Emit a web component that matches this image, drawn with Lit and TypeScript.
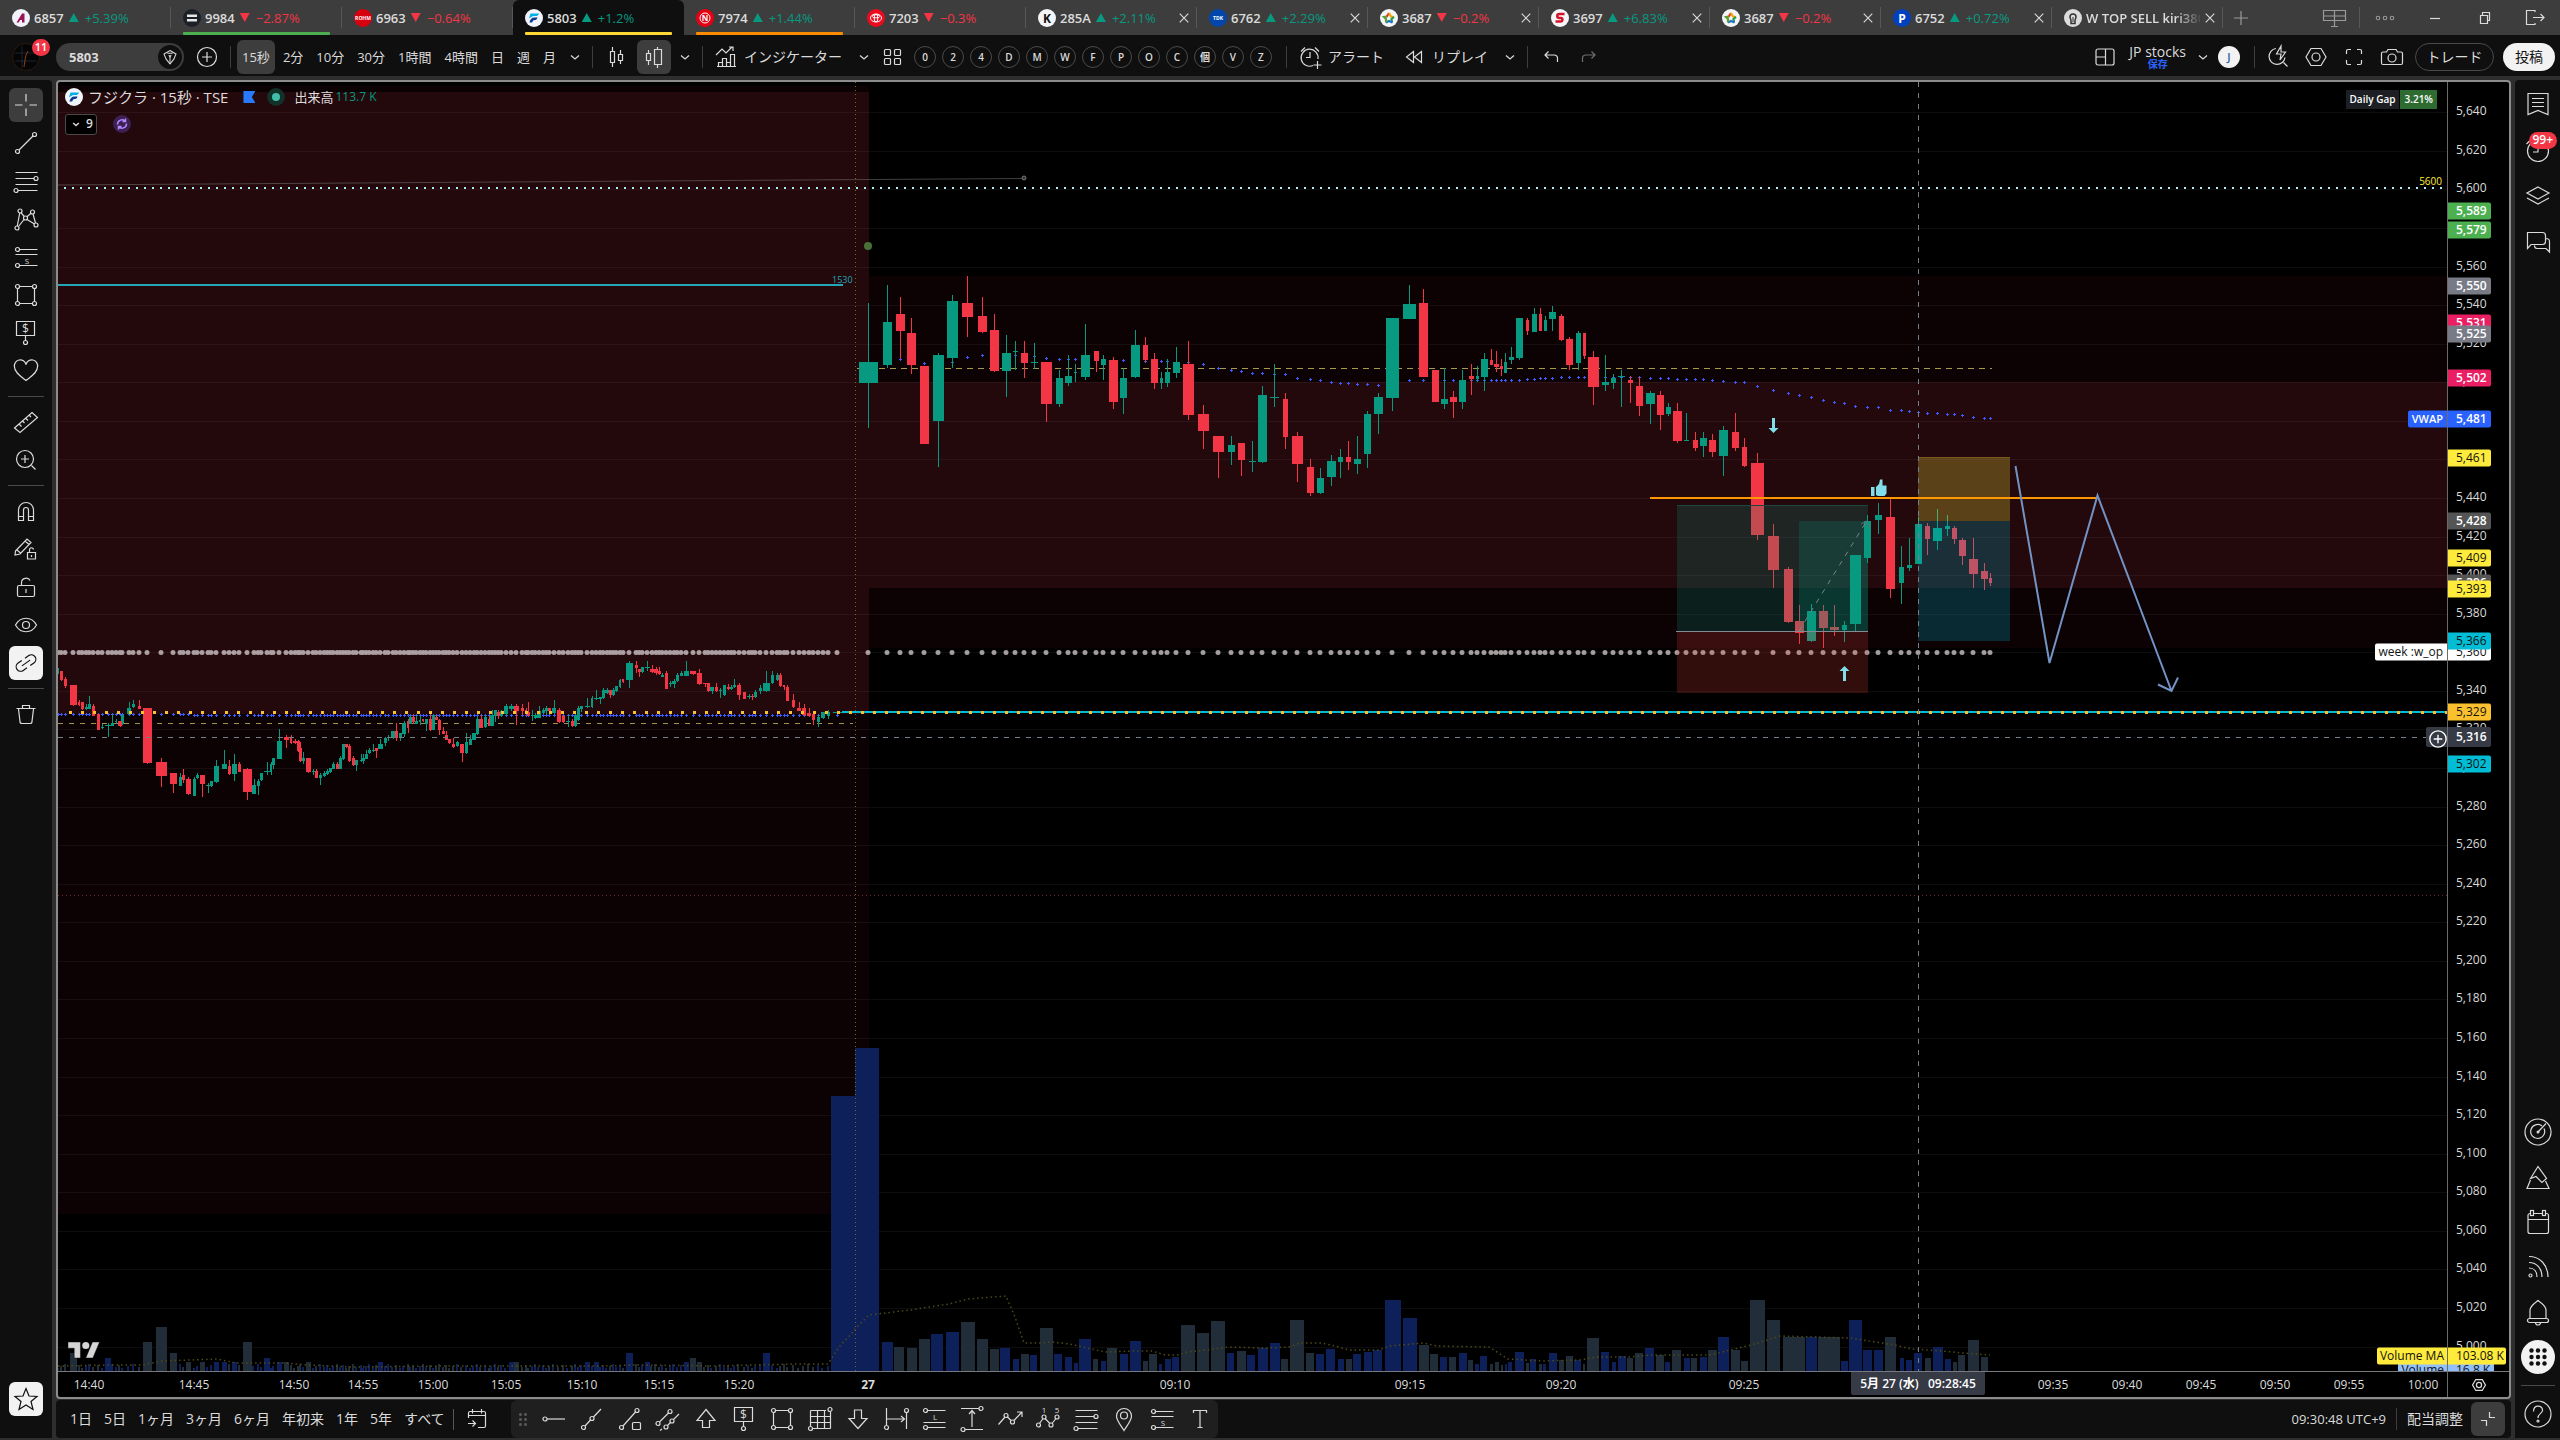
import { LitElement, html, svg, css, nothing } from "lit";
import { customElement } from "lit/decorators.js";
import { classMap } from "lit/directives/class-map.js";

/* ------------------------------------------------------------------ */
/* Icons (28 x 28 grid)                                                */
/* ------------------------------------------------------------------ */
const I: Record<string, unknown> = {
  cross: svg`<path d="M3 14h7.500M17.500 14H25M14 3v7.500M14 17.500V25"/>`,
  trend: svg`<circle cx="5.500" cy="22.500" r="2"/><circle cx="22.500" cy="5.500" r="2"/><path d="M7 21L21 7"/>`,
  fib: svg`<path d="M3.500 5.500h22M3.500 11.500H22M3.500 17.500h22M6 23.500h19.500"/><circle cx="24" cy="11.500" r="2"/><circle cx="4" cy="23.500" r="2"/>`,
  pattern: svg`<circle cx="5" cy="23" r="2"/><circle cx="8" cy="6" r="2"/><circle cx="13.500" cy="13" r="2"/><circle cx="20.500" cy="7" r="2"/><circle cx="24" cy="20" r="2"/><path d="M5.300 21L7.700 8M9 7.700l3.200 3.800M15 11.700l4-3.500M21 9l2.500 9M15 14.500l7.500 4.500M12 14.500l-5.500 7"/>`,
  short: svg`<path d="M7.500 6.500h18M3.500 11.500h22M7.500 22.500h18"/><circle cx="5.500" cy="6.500" r="2"/><circle cx="5.500" cy="22.500" r="2"/><text x="15" y="20.500">S</text>`,
  long: svg`<path d="M7.500 5.500h18M3.500 17.500h22M7.500 22.500h18"/><circle cx="5.500" cy="5.500" r="2"/><circle cx="5.500" cy="22.500" r="2"/><text x="15" y="14.500">L</text>`,
  rect: svg`<path d="M7.500 5.500h13M7.500 22.500h13M5.500 7.500v13M22.500 7.500v13"/><circle cx="5.500" cy="5.500" r="2"/><circle cx="22.500" cy="5.500" r="2"/><circle cx="5.500" cy="22.500" r="2"/><circle cx="22.500" cy="22.500" r="2"/>`,
  price: svg`<path d="M4.500 2.500h18v14h-18zM13.500 17v4.500"/><circle cx="13.500" cy="23.500" r="2"/><text class="big" x="13.500" y="13.500">$</text>`,
  heart: svg`<path d="M14 23.500C9 19.500 2.500 15.500 2.500 10a5.500 5.500 0 0 1 11.500-2.500A5.500 5.500 0 0 1 25.500 10c0 5.500-6.500 9.500-11.500 13.500z"/>`,
  ruler: svg`<path d="M2.500 20L20 4.500l5.500 5L8 24.500zM7 16l2.500 2.500M10.500 13l2 2M13.500 10l2.500 2.500M17 7l2 2"/>`,
  zoomin: svg`<circle cx="13" cy="13" r="8.500"/><path d="M19.500 19.500l4 4M9 13h8M13 9v8"/>`,
  magnet: svg`<path d="M6.500 23.500V13a7.500 7.500 0 0 1 15 0v10.500h-5V13a2.500 2.500 0 0 0-5 0v10.500zM6.500 19.500h5M16.500 19.500h5"/>`,
  penlock: svg`<path d="M3.500 16L15 4l4 3.500L8 19l-5 1zM13 6l4 3.500M5 15l3.500 3M15.500 17.500h8v6.500h-8zM17.500 17.500v-2.500a2 2 0 0 1 4-.5M19.500 20v2"/>`,
  lock: svg`<path d="M7 12.500h14a1.500 1.500 0 0 1 1.500 1.500v8a1.500 1.500 0 0 1-1.500 1.500H7A1.500 1.500 0 0 1 5.500 22v-8A1.500 1.500 0 0 1 7 12.500zM9.500 12.500V9.500c0-5 7-5.500 8.500-2M14 16v4"/>`,
  eye: svg`<path d="M3.500 14c5-9 16-9 21 0-5 9-16 9-21 0z"/><circle cx="14" cy="14" r="3.500"/>`,
  link: svg`<g transform="rotate(-35 14 14)"><path d="M12 9.500H7.500a4.500 4.500 0 0 0 0 9H12M16 9.500h4.500a4.500 4.500 0 0 1 0 9H16M9 14h10"/></g>`,
  trash: svg`<path d="M4.500 8.500h19M10.500 8V5.500h7V8M6.500 9l1.500 12.500a2 2 0 0 0 2 2h8a2 2 0 0 0 2-2L21.500 9"/>`,
  star: svg`<path d="M14 3.500l3 7.500 8 .5-6 5 2 8-7-4.500-7 4.500 2-8-6-5 8-.5z"/>`,
  list: svg`<path d="M4 3.500h20v21l-10-4-10 4zM8 8.500h12M8 12.500h12M8 16.500h12"/>`,
  clock: svg`<circle cx="14" cy="15" r="10.500"/><path d="M14 9v7H9M2.500 8l4-4"/>`,
  layers: svg`<path d="M14 5l11 6-11 6-11-6zM3 16l11 6 11-6"/>`,
  chat: svg`<path d="M3.500 4.500h15a3 3 0 0 1 3 3v6a3 3 0 0 1-3 3H7l-3.500 4zM22 10.500c2 0 3.500 1 3.500 3v10.500L22 20.500h-9c-1.500 0-2.500-1-2.500-3"/>`,
  radar: svg`<circle cx="14" cy="14" r="13"/><path d="M20 10.500a7 7 0 1 1-2-2.500M14 14l8-8.500"/><circle class="fill" cx="14" cy="14" r="1.500"/>`,
  mountain: svg`<path d="M14 3.500l8.500 12-4.500 4-6-6-5.500 2zM6.500 17L3 25.500h22L21.500 18"/>`,
  calendar: svg`<path d="M9 5.500h10M6.500 5.500H6a2 2 0 0 0-2 2v16a2 2 0 0 0 2 2h16.500a2 2 0 0 0 2-2v-16a2 2 0 0 0-2-2H22M4 11.500h20.500"/><rect x="6.500" y="2.500" width="3" height="5"/><rect x="18.500" y="2.500" width="3" height="5"/>`,
  rss: svg`<circle cx="6.500" cy="22.500" r="1.500"/><path d="M5 15c5 0 8 3.500 8 9M5 9.500c8 0 13 6 13 14.500M5 3.500c11 0 19 8.500 19 20.500"/>`,
  bell: svg`<path d="M6 20.500V12c0-4 4-6.500 8-9.500 4 3 8 5.500 8 9.500v8.500M11.500 24.500a2.500 2.500 0 0 0 5 0"/><rect x="3.500" y="20.500" width="21" height="4" rx="2"/>`,
  apps: svg`<g class="fill"><circle cx="7.500" cy="7.500" r="2.200"/><circle cx="14" cy="7.500" r="2.200"/><circle cx="20.500" cy="7.500" r="2.200"/><circle cx="7.500" cy="14" r="2.200"/><circle cx="14" cy="14" r="2.200"/><circle cx="20.500" cy="14" r="2.200"/><circle cx="7.500" cy="20.500" r="2.200"/><circle cx="14" cy="20.500" r="2.200"/><circle cx="20.500" cy="20.500" r="2.200"/></g>`,
  help: svg`<circle cx="14" cy="14" r="13"/><path d="M9.500 11.500C9.500 4 19 5 18.500 10.500 18 14 14 13.500 14 18"/><circle cx="14" cy="21" r="1"/>`,
  plusc: svg`<circle cx="14" cy="14" r="9.500"/><path d="M9 14h10M14 9v10"/>`,
  candles: svg`<path d="M10.500 4v4M10.500 19v5M8.500 8.500h4v11h-4zM18.500 7v4M18.500 17v4M16.500 11.500h4v6h-4z"/>`,
  candlev: svg`<path d="M8.500 7v4M8.500 17v5M6.500 10.500h4v7h-4zM17.500 4v3M17.500 21v4M14.500 6.500h7v15h-7z"/>`,
  indic: svg`<path d="M4 12l6-6 4 4 6-6M6.500 23.500v-4h4v4M10.500 23.500v-8h4v8M14.500 19.500h4v4M18.500 23.500v-12h4v12zM5 23.500h19M17 4h4v4"/>`,
  grid4: svg`<rect x="6.500" y="6.500" width="6" height="6" rx="1"/><rect x="16.500" y="6.500" width="6" height="6" rx="1"/><rect x="6.500" y="15.500" width="6" height="6" rx="1"/><rect x="16.500" y="15.500" width="6" height="6" rx="1"/>`,
  alarm: svg`<path d="M17 22.500A8.500 8.500 0 1 1 22 16M14 9v5.500h-4M5 8.500l4-4M19 4.500l4 4M21.500 18v8M17.500 22h8"/>`,
  rewind: svg`<path d="M13.500 8.500v11L6.500 14zM21.500 8.500v11l-7-5.500z"/>`,
  undo: svg`<path d="M11.500 8.500L8 12l3.500 3.500M8.500 12H17a3.500 3.500 0 0 1 3.500 3.500V19"/>`,
  redo: svg`<path d="M16.500 8.500L20 12l-3.500 3.500M19.500 12H11a3.500 3.500 0 0 0-3.500 3.500V19"/>`,
  layout: svg`<rect x="5" y="6" width="18" height="16" rx="2"/><path d="M14.500 6v16M5 14h9.500"/>`,
  quick: svg`<path d="M12 5.500a8 8 0 1 0 9 9M19.500 19.500l4 4M17 3l-4.500 8H17l-1 6 5.500-8H17z"/>`,
  hex: svg`<path d="M9 5.500h10l5 8.500-5 8.500H9L4 14z"/><circle cx="14" cy="14" r="4"/>`,
  full: svg`<path d="M6.500 11V8a1.500 1.500 0 0 1 1.500-1.500h3M17 6.500h3A1.500 1.500 0 0 1 21.500 8v3M21.500 17v3a1.500 1.500 0 0 1-1.500 1.500h-3M11 21.500H8A1.500 1.500 0 0 1 6.500 20v-3"/>`,
  camera: svg`<path d="M10 6.500h8l1.500 2.500H23a1.500 1.500 0 0 1 1.500 1.500V20a1.500 1.500 0 0 1-1.500 1.500H5A1.500 1.500 0 0 1 3.500 20v-9.500A1.500 1.500 0 0 1 5 9h3.500z"/><circle cx="14" cy="15" r="4"/>`,
  chev: svg`<path d="M10 12.500l4 3.500 4-3.500"/>`,
  goto: svg`<path d="M5.500 13V8A1.500 1.500 0 0 1 7 6.500h14A1.500 1.500 0 0 1 22.500 8v13a1.500 1.500 0 0 1-1.500 1.500h-6M5.500 10.500h17M9.500 4v4.500M18.500 4v4.500M5 18.500h7M9.500 15.500l3 3-3 3"/>`,
  hray: svg`<circle cx="5" cy="14" r="2"/><path d="M7 14h18"/>`,
  ray: svg`<circle cx="5.500" cy="22.500" r="2"/><circle cx="14" cy="13.500" r="2"/><path d="M7 21l5.500-6M15.500 12L23 4"/>`,
  raybox: svg`<circle cx="5.500" cy="22.500" r="2"/><circle cx="21" cy="5.500" r="2"/><path d="M7 21L19.500 7"/><rect x="16.500" y="17.500" width="8" height="7" rx="1"/>`,
  channel: svg`<circle cx="4" cy="18.500" r="2"/><circle cx="16" cy="6.500" r="2"/><circle cx="12" cy="22" r="2"/><circle cx="18" cy="16" r="2"/><path d="M5.500 17l9-9M13.500 20.500l3-3M19.500 14.500L25 9M8 24l-2 1.500"/>`,
  upar: svg`<path d="M14 4.500l9 11h-5.500v7h-7v-7H5z"/>`,
  downar: svg`<path d="M14 23.500l-9-10h5.500V5h7v8.500H23z"/>`,
  table: svg`<path d="M4.500 5.500H20M4.500 11.500h20M4.500 17.500h20M7 23.500h17.500M4.500 5.500V21M11.500 5.500v18M18.500 5.500v18M24.500 7v16.500"/><circle cx="24" cy="4.500" r="2"/><circle cx="4.500" cy="23.500" r="2"/>`,
  drange: svg`<path d="M4.500 3v17M24.500 7v17M5 14h17M19 11l3.500 3-3.500 3"/><circle cx="4.500" cy="22.500" r="2"/><circle cx="24.500" cy="5.500" r="2"/>`,
  prange: svg`<path d="M3 3.500h18M7 24.500h18M14 22V6M11 9l3-3.500L17 9"/><circle cx="23" cy="3.500" r="2"/><circle cx="5" cy="24.500" r="2"/>`,
  zig: svg`<circle cx="10" cy="10.500" r="2"/><circle cx="16.500" cy="17" r="2"/><path d="M2.500 19.500L9 12M11.500 12l3.500 3.500M18 15.500l7.500-8M21 7h5v5"/>`,
  elliott: svg`<circle cx="4.500" cy="20" r="2"/><circle cx="10" cy="12" r="2"/><circle cx="17" cy="20" r="2"/><circle cx="23" cy="12" r="2"/><path d="M5.500 18.500l3.500-5M11 13.500l5 5M18 18.500l4-5"/><text x="10" y="7.500">1</text><text x="23" y="7.500">5</text>`,
  pin: svg`<path d="M14 25.500C10 19 6.500 15.500 6.500 11a7.500 7.500 0 0 1 15 0c0 4.500-3.500 8-7.500 14.500z"/><circle cx="14" cy="10.500" r="3.500"/>`,
  textt: svg`<path d="M7.500 8V5.500h13V8M14 5.500v17M11.500 22.500h5"/>`,
  collapse: svg`<path d="M15.500 7v5.500H21M7 15.500h5.500V21"/>`,
  close: svg`<path d="M8 8l12 12M20 8L8 20"/>`,
  plus: svg`<path d="M7 14h14M14 7v14"/>`,
  monitor: svg`<path d="M3.500 6.500h22v10h-22zM14.500 6.500V22M11 22.500h7M3.500 12h22"/>`,
  dots3: svg`<circle cx="6" cy="14" r="2"/><circle cx="14" cy="14" r="2"/><circle cx="22" cy="14" r="2"/>`,
  min: svg`<path d="M9 14.500h10"/>`,
  restore: svg`<path d="M9.500 11.500h7v8h-7zM11.500 11V8.500h7v8H17"/>`,
  exit: svg`<path d="M14 8V6.500H5.500v14H14V19M12 13.500h11M19.500 10l3.500 3.500-3.500 3.500"/>`,
  gem: svg`<path d="M14 6.500l7 4-2.500 6L14 22l-4.500-5.500-2.500-6zM14 12v8M11 9.500h6"/><path class="fill" d="M12 12h4l-2 3z"/>`,
};
const ic = (name: string) =>
  html`<svg class="ic" viewBox="0 0 28 28" aria-hidden="true">${I[name]}</svg>`;

const iconCss = css`
  .ic { width: 28px; height: 28px; flex: none; fill: none; stroke: currentColor; stroke-width: 1.2; display: block; }
  .ic .fill { fill: currentColor; stroke: none; }
  .ic text { font: 8px "Open Sans", sans-serif; fill: currentColor; stroke: none; text-anchor: middle; }
  .ic text.big { font-size: 12px; }
`;

/* ------------------------------------------------------------------ */
/* Company marks                                                       */
/* ------------------------------------------------------------------ */
const marks: Record<string, unknown> = {
  advan: svg`<circle cx="9" cy="9" r="9" fill="#f0f3fa"/><path d="M4.500 13.500L10 4.500h2.500v9H10v-2.500H8L6.800 13.500z" fill="#9c1458"/>`,
  soft: svg`<circle cx="9" cy="9" r="9" fill="#1b2126"/><path d="M4 5.500h10v2.500H4zM4 10h10v2.500H4z" fill="#e6e6e6"/>`,
  rohm: svg`<circle cx="9" cy="9" r="9" fill="#d8000f"/><text x="9" y="11" class="m" font-size="5" fill="#fff">ROHM</text>`,
  fuji: svg`<circle cx="9" cy="9" r="9" fill="#f0f3fa"/><path d="M5.500 4.500H14c-.5 2-2 2.500-3.500 2.500H9C7 7 5.500 8.500 4 9.500z" fill="#00aeea"/><path d="M4.500 13.500c.5-3 2-5 5-5h3c-.5 2-1.500 2.500-3 2.500-1.500 0-1.800 1.500-2.500 2.500z" fill="#0b3b8f"/>`,
  nin: svg`<circle cx="9" cy="9" r="9" fill="#e60012"/><circle cx="9" cy="9" r="5" fill="none" stroke="#fff"/><text x="9" y="12" class="m" font-size="8" fill="#fff">N</text>`,
  toy: svg`<circle cx="9" cy="9" r="9" fill="#eb0a1e"/><g fill="none" stroke="#fff"><ellipse cx="9" cy="9" rx="5.500" ry="4"/><ellipse cx="9" cy="9" rx="1.800" ry="4"/><ellipse cx="9" cy="7.300" rx="3.800" ry="1.600"/></g>`,
  kio: svg`<circle cx="9" cy="9" r="9" fill="#f4f5f8"/><text x="9" y="13.500" class="m" font-size="12" fill="#111">K</text>`,
  tdk: svg`<circle cx="9" cy="9" r="9" fill="#0046ad"/><text x="9" y="11" class="m" font-size="5" fill="#fff">TDK</text>`,
  fix: svg`<circle cx="9" cy="9" r="9" fill="#f4f5f8"/><g fill="none" stroke-width="2.200"><path d="M9 4L6.500 8" stroke="#e63329"/><path d="M9 4l2 3.500 3 .5" stroke="#f5a400"/><path d="M14 8l-2.500 2 .5 3.500" stroke="#1c9e4b"/><path d="M12.500 13.500L9 12l-3 1.500" stroke="#1e73c9"/><path d="M6 13.500V10L4 8l3-.5" stroke="#5c9f2f"/></g>`,
  shift: svg`<circle cx="9" cy="9" r="9" fill="#f4f5f8"/><path d="M13.500 5H8.500C5.500 5 5.500 9 8.500 9H10c2 0 2 3.500-.5 3.500H4.500" fill="none" stroke="#d3122a" stroke-width="2.500"/>`,
  pana: svg`<circle cx="9" cy="9" r="9" fill="#0041c0"/><text x="9" y="13.500" class="m" font-size="12" fill="#fff">P</text>`,
  index: svg`<circle cx="9" cy="9" r="9" fill="#dcdcdc"/><path d="M6 8a3 3 0 0 1 6 0c0 1.500-1 2-1 3.500v3H7v-3C7 10 6 9.500 6 8z" fill="none" stroke="#333" stroke-width="1.500"/><path d="M9 8v5" stroke="#333"/>`,
};
const mark = (name: string) =>
  html`<svg class="mark" viewBox="0 0 18 18" aria-hidden="true">${marks[name]}</svg>`;
const markCss = css`
  .mark { width: 18px; height: 18px; flex: none; display: block; }
  .mark .m { font-family: "Open Sans", sans-serif; font-weight: 700; text-anchor: middle; }
`;

/* ------------------------------------------------------------------ */
/* Series: left, right, high, body top, body bottom, low, direction    */
/* ------------------------------------------------------------------ */
type Bar = { x0: number; x1: number; h: number; t: number; b: number; l: number; up: boolean };
const session = (ox: number, oy: number, sx: number, sy: number, rows: string): Bar[] =>
  rows.trim().split(/\s*;\s*/).filter(Boolean).map((r) => {
    const p = r.split(" ");
    const n = p.slice(0, 6).map(Number);
    const X = (v: number) => Math.round(ox + v / sx);
    const Y = (v: number) => Math.round(oy + v / sy);
    return { x0: X(n[0]), x1: Math.max(X(n[1]), X(n[0]) + 1), h: Y(n[2]), t: Y(n[3]), b: Math.max(Y(n[4]), Y(n[3]) + 1), l: Y(n[5]), up: p[6] === "u" };
  });

const afternoon = session(50, 600, 1.912, 3, `
14 18 205 213 219 222 u;19 25 213 213 240 243 d;27 33 231 237 258 264 d;38 52 255 255 315 318 d;54 58 300 306 315 318 d;59 65 306 306 327 330 d;66 72 312 321 327 330 u;72 78 288 312 327 327 u;80 86 312 318 348 348 d;90 96 342 342 390 390 d;97 103 372 381 384 387 u;105 116 369 375 378 411 u;117 123 342 369 378 378 u;124 129 357 363 367 372 u;130 137 363 363 378 381 d;136 142 342 345 372 375 u;148 155 306 324 342 348 u;157 163 300 312 321 324 u;168 174 300 318 327 327 d;178 195 324 324 489 492 d;203 224 474 486 528 561 d;229 243 519 519 552 579 d;246 252 519 531 558 558 u;252 258 507 525 540 549 d;260 270 531 537 582 585 d;273 279 531 537 588 588 u;279 285 519 525 534 537 u;287 297 525 525 552 591 d;299 306 549 555 558 579 u;306 312 543 543 558 561 u;314 323 480 498 546 549 u;329 339 450 492 507 507 u;340 346 480 498 522 525 d;348 358 462 492 522 543 u;359 365 486 492 516 516 d;369 386 504 507 576 600 d;387 394 537 555 582 582 u;396 402 537 543 558 585 u;402 407 519 519 540 543 u;409 420 486 513 516 525 u;420 425 486 492 516 525 u;424 430 474 474 495 507 u;434 444 387 423 477 477 u;447 457 405 411 420 444 d;458 463 405 411 429 432 d;464 473 417 423 429 432 d;472 478 420 423 453 456 d;477 482 426 444 483 486 d;482 488 456 474 483 492 u;490 499 474 474 516 519 d;501 507 507 513 516 525 u;507 513 507 513 534 534 d;514 520 519 525 534 555 u;522 527 513 519 528 531 u;527 533 507 513 522 525 u;533 539 504 504 516 519 u;539 545 486 492 507 507 u;547 553 486 492 507 507 d;553 559 468 474 507 507 u;558 564 432 432 477 480 u;564 570 432 432 441 444 d;570 576 432 438 483 486 d;577 583 468 474 495 498 d;583 589 480 480 495 513 u;592 597 462 480 483 486 u;597 602 462 474 483 492 u;602 608 450 462 477 477 u;608 614 444 450 459 462 u;616 621 432 450 453 456 u;621 627 444 444 453 474 d;627 637 417 432 447 447 u;639 644 411 414 429 438 u;645 650 405 411 414 423 u;652 659 393 393 414 417 u;660 666 369 393 414 423 d;667 673 399 399 411 423 u;673 680 363 369 402 411 u;682 687 357 363 384 399 d;686 692 345 351 372 372 u;692 698 342 351 366 372 d;698 704 345 363 372 372 u;705 710 348 360 366 375 u;711 715 357 357 363 366 d;717 722 357 357 372 393 u;725 730 342 357 390 393 d;730 736 345 345 390 390 u;736 741 345 351 360 360 d;741 748 357 360 390 405 d;750 756 381 393 402 402 d;756 761 393 405 420 420 d;761 767 417 417 429 432 d;768 774 414 432 441 444 d;776 782 423 426 438 441 u;783 792 432 432 459 486 d;794 799 399 426 459 462 u;801 807 405 417 435 435 u;807 814 399 399 420 420 u;814 820 348 357 402 405 u;821 828 345 357 384 384 d;829 836 345 351 381 384 u;837 841 348 357 378 378 d;842 849 330 345 378 378 u;849 855 330 330 348 366 u;855 861 330 336 348 357 d;861 866 330 333 348 351 u;868 875 312 318 342 348 u;878 887 312 318 327 333 u;888 897 312 318 333 375 d;900 907 312 324 333 345 d;908 912 324 330 339 342 d;912 918 306 336 348 348 d;920 925 330 345 348 363 u;926 931 339 345 354 357 u;932 938 318 333 354 354 u;940 946 324 330 339 342 u;947 952 318 324 333 345 u;953 958 324 324 333 336 d;959 968 300 324 339 342 u;970 977 324 330 366 369 d;979 985 345 348 366 369 d;987 994 345 363 366 381 u;996 1001 357 363 378 381 d;1002 1008 345 345 378 381 u;1008 1014 318 324 360 363 u;1014 1020 318 318 327 336 u;1022 1032 294 318 321 324 u;1034 1039 288 294 321 324 u;1040 1050 270 294 297 300 u;1050 1056 291 291 297 312 u;1056 1062 264 270 294 297 u;1062 1068 264 270 279 282 u;1068 1074 270 270 285 294 d;1074 1080 264 270 285 288 u;1080 1086 258 258 273 276 u;1087 1092 237 240 261 264 u;1093 1098 237 237 246 249 d;1101 1115 183 189 240 264 u;1118 1124 183 195 204 219 d;1124 1130 207 207 216 231 d;1130 1136 201 201 216 219 u;1137 1148 183 201 204 213 u;1148 1154 195 207 216 219 d;1155 1162 201 207 219 225 d;1162 1168 201 213 222 225 d;1169 1174 219 225 231 231 u;1176 1182 213 219 267 267 d;1183 1189 243 249 252 261 u;1190 1196 237 243 252 264 u;1197 1203 219 225 243 246 u;1204 1210 213 219 228 228 u;1212 1222 183 213 228 228 u;1223 1236 213 213 222 225 d;1237 1247 207 219 252 255 d;1248 1256 249 249 252 261 d;1256 1262 249 249 273 276 d;1261 1270 261 261 273 282 u;1271 1277 249 261 273 276 d;1279 1285 264 270 273 294 u;1287 1293 255 255 285 288 u;1294 1300 252 261 267 270 d;1300 1306 255 261 267 270 u;1306 1312 237 255 261 264 u;1314 1322 249 255 285 300 d;1325 1331 276 276 297 297 d;1332 1340 282 288 291 297 u;1341 1346 282 288 291 300 d;1346 1352 270 276 291 294 u;1356 1361 255 264 273 282 u;1363 1376 213 249 273 276 u;1378 1385 213 225 249 252 u;1388 1394 219 225 240 243 u;1394 1400 219 225 258 261 d;1401 1406 255 255 261 270 d;1407 1413 255 261 303 303 d;1418 1425 282 300 321 324 d;1429 1436 306 324 333 333 d;1438 1445 312 324 345 348 d;1448 1455 324 339 348 351 d;1456 1463 342 342 360 375 d;1466 1472 345 351 366 381 u;1475 1482 336 336 354 357 u;1485 1492 330 336 348 357 u;1497 1514 336 336 339 339 u`);

const morning = [
  ...session(840, 220, 2.45, 3, `
47 93 249 426 489 624 u;105 127 195 306 435 444 u;137 159 231 282 333 418 d;164 186 294 339 435 462 d;196 218 438 438 672 672 d;228 255 399 405 603 741 u;262 289 225 243 414 444 u;299 326 168 249 291 351 d;338 360 231 288 336 339 d;367 390 282 330 453 456 d;397 419 345 399 453 531 u;424 436 363 393 396 450 u;443 461 363 399 429 474 d;468 485 369 426 429 446 u;492 519 426 426 552 606 d;529 546 450 474 552 561 u;551 568 405 468 489 498 u;573 581 432 456 459 486 u;590 612 312 405 471 480 u;622 635 393 393 423 456 d;639 652 405 417 435 480 u;659 681 411 420 546 567 d;686 703 444 474 534 582 u;713 735 330 375 471 474 u;742 755 351 375 420 426 d;762 779 399 417 489 507 d;784 791 456 474 489 507 u;796 808 417 456 489 501 u;816 833 381 426 459 474 u;840 867 363 432 585 600 d;877 904 555 582 633 687 d;914 941 648 648 696 774 d;951 968 648 675 696 735 u;975 992 669 669 720 768 d;1002 1019 663 723 726 756 u;1024 1046 498 525 726 729 u;1053 1076 432 531 534 561 u;1085 1098 519 537 651 687 d;1107 1134 636 648 732 786 d;1144 1161 717 741 819 828 d;1169 1186 744 774 819 822 u;1193 1215 705 723 771 798 u;1220 1232 687 711 726 774 u;1240 1252 663 711 726 750 d;1259 1276 648 717 732 762 u;1284 1301 573 582 702 744 u;1308 1330 519 531 582 642 u;1338 1370 294 294 534 573 u`),
  ...session(1400, 260, 3, 3, `
9 48 75 132 177 177 u;57 84 87 129 351 351 d;96 117 330 330 426 426 d;123 144 324 417 432 447 u;150 171 393 411 426 474 d;177 198 330 360 426 447 u;207 222 312 348 357 405 d;228 237 318 348 357 366 u;243 264 279 297 351 393 u;270 279 267 300 315 315 d;282 297 273 312 321 336 d;300 309 297 318 327 348 d;312 321 279 306 339 339 u;327 342 261 291 300 312 u;348 369 174 174 294 300 u;378 387 174 180 213 225 d;396 411 144 162 216 216 u;417 426 144 162 213 213 d;432 441 168 180 213 213 u;447 468 138 156 177 213 u;477 492 162 168 240 243 d;498 519 231 237 315 330 d;528 543 213 219 309 330 u;549 558 219 219 288 297 d;564 597 273 291 381 435 d;606 627 285 366 375 393 u;633 648 342 354 369 387 u;654 675 330 348 351 441 u;684 699 348 360 369 429 d;708 729 351 378 438 468 d;738 765 393 399 432 492 u;771 792 393 405 465 510 d;798 813 429 441 462 468 u;819 846 429 453 543 549 d;852 867 459 540 543 543 u;879 894 516 540 564 573 d;900 921 516 534 558 591 u;927 948 522 540 576 591 d;957 984 498 510 588 648 u;996 1017 459 516 564 573 d;1026 1041 534 561 618 621 d;1053 1092 579 609 825 840 d;1104 1137 792 828 930 984 d;1152 1179 921 927 1086 1089 d;1185 1212 1035 1083 1119 1152 d;1221 1248 1032 1053 1143 1146 u`),
  ...session(1640, 400, 2.8, 3, `
501 526 615 633 684 744 d;532 557 615 681 690 708 d;566 580 663 675 690 726 u;588 619 465 465 672 693 u;627 647 345 363 474 489 u;658 678 309 345 360 402 u;689 714 297 351 567 594 d;725 739 438 501 549 612 u;748 762 414 495 504 513 u;770 790 350 372 492 492 u;798 812 369 378 417 465 d;820 846 327 384 423 450 u;854 868 345 378 387 408 u;874 888 378 384 417 432 d;893 913 414 420 468 495 d;921 946 414 477 522 564 d;955 974 489 513 537 570 d;977 986 519 534 549 558 d`),
];
const allBars = [...afternoon, ...morning];

const BASE = 1371;
type Vol = { x0: number; x1: number; y: number; up: boolean };
const volume = (ox: number, oy: number, sx: number, rows: string): Vol[] =>
  rows.split(";").map((r) => {
    const p = r.trim().split(" ");
    return { x0: Math.round(ox + +p[0] / sx), x1: Math.round(ox + +p[1] / sx), y: Math.round(oy + +p[2] / 3), up: p[3] === "b" };
  });
/* Bar width grows with traded volume, so width squared gives the column height. */
const fromWidth = (b: Bar): Vol => {
  const w = b.x1 - b.x0;
  return { x0: b.x0 - 1, x1: b.x1 + 1, y: Math.round(BASE - Math.max(4, 0.42 * w * w)), up: b.up };
};
const volumes: Vol[] = [
  ...afternoon.slice(0, -1).map((b, i) => {
    const w = b.x1 - b.x0;
    return { x0: b.x0, x1: w > 4 ? b.x1 : b.x0 + 2, y: w > 4 ? Math.round(BASE - 0.36 * w * w) : BASE - 3 - ((i * 7) % 5), up: b.up };
  }),
  { x0: 831, x1: 855, y: 1096, up: true },
  { x0: 855, x1: 879, y: 1048, up: true },
  ...volume(850, 1220, 1.823, "58 78 366 b;80 98 381 g;104 122 384 g;126 146 357 g;148 170 342 b;175 199 336 b;202 228 306 g;232 252 357 g;255 272 387 g;273 292 384 b;297 308 417 b;312 326 402 g;328 341 405 b;346 370 324 g;372 387 402 b;392 405 411 b;408 416 429 b;418 439 357 b;443 452 417 g;458 467 423 b;469 487 384 g;492 507 402 b;511 531 363 b;534 543 423 g;545 560 402 g;563 569 432 b;574 585 417 b;587 600 411 b;603 629 315 g;633 655 339 g;658 684 303 g;687 700 399 b;706 722 393 g;724 738 405 b;744 762 384 b;766 784 369 b;786 799 417 g;802 828 300 g;831 846 399 g;850 864 402 b;868 884 387 b;890 901 417 b;904 915 417 g;917 932 402 b;937 952 396 b;954 970 390 b;975 1005 240 b;1008 1034 294 b;1037 1056 375 g;1057 1072 402 g;1076 1088 411 b;1092 1105 411 g;1110 1125 399 b;1127 1136 420 g;1140 1146 432 b;1149 1161 408 b;1167 1172 432 g;1176 1183 426 g;1187 1191 435 g;1194 1198 432 b;1199 1207 426 b;1212 1229 396 b;1233 1238 429 g;1240 1251 417 b;1256 1262 432 g;1264 1268 432 b;1274 1289 399 b;1292 1302 420 g;1305 1318 408 g;1320 1333 420 b;1336 1340 432 g;1344 1366 354 g;1369 1384 396 b;1389 1397 426 b;1400 1414 408 b;1416 1427 414 g;1431 1446 399 g;1449 1466 384 b;1470 1484 405 g;1486 1495 426 b;1499 1515 390 g;1521 1532 414 b;1534 1544 414 g;1550 1563 411 b"),
  ...morning.filter((b) => b.x0 > 1708 && b.x0 < 1896).map(fromWidth),
  ...volume(1900, 1080, 2.376, "0 10 834 b;14 29 840 b;33 52 819 b;59 74 834 g;78 102 801 b;107 121 837 b;126 135 846 g;138 154 825 g;162 188 780 g;192 209 831 g"),
];

const path = (rows: string) => rows.split(";").map((s) => s.split(" ").map(Number) as [number, number]);
const shift = (pts: [number, number][], ox: number, oy: number, sx: number, sy: number) =>
  pts.map(([x, y]) => [Math.round(ox + x / sx), Math.round(oy + y / sy)] as [number, number]);

const volMa = [
  ...shift(path("105 257;200 254;258 256;295 242;395 236;430 249;520 248;560 254;640 260;820 258;1100 259;1160 255;1300 257;1450 252;1510 251;1530 200;1555 155"), 0, 1280, 1.823, 3),
  ...shift(path("5 332;35 285;110 270;180 252;215 238;285 227;300 290;318 368;345 370;370 366;400 372;425 381;465 397;520 394;550 394;575 404;600 404;615 395;650 391;690 382;760 383;800 380;820 370;860 369;885 377;910 390;965 390;985 378;1045 369;1070 377;1165 381;1200 418;1260 424;1330 420;1360 411;1420 411;1460 405;1568 405"), 850, 1220, 1.823, 3),
  [1755, 1344] as [number, number], [1780, 1336] as [number, number], [1850, 1338] as [number, number], [1895, 1345] as [number, number],
  ...shift(path("5 800;30 808;100 812;150 818;215 824"), 1900, 1080, 2.376, 3),
];
const vwap = [
  ...shift(path("120 418;148 418;207 430;275 427;312 412;349 406;430 406;476 409;506 415;540 418;577 418;694 421;850 427;890 433;928 445;984 454;1010 460;1090 463;1120 475;1177 481;1204 487;1268 493;1320 496;1350 485"), 840, 220, 2.45, 3),
  ...shift(path("28 361;335 361;380 358;430 355;510 352;718 352;750 355;886 358;937 361;970 364;1033 367;1072 379;1120 391;1165 400;1234 412"), 1400, 260, 3, 3),
  ...shift(path("544 7;572 10;603 19;668 22;701 31;732 31;780 37;861 43;903 46;934 52;981 55"), 1640, 400, 2.8, 3),
];
const at = (pts: [number, number][], x: number) => {
  for (let i = 1; i < pts.length; i++)
    if (x <= pts[i][0]) {
      const [a, b] = [pts[i - 1], pts[i]];
      return Math.round(a[1] + ((x - a[0]) / (b[0] - a[0] || 1)) * (b[1] - a[1]));
    }
  return pts[pts.length - 1][1];
};
const centre = (b: Bar) => Math.floor((b.x0 + b.x1) / 2);
const box = (x0: number, y0: number, x1: number, y1: number) => `M${x0} ${y0}H${x1}V${y1}H${x0}z`;
const candlePath = (up: boolean) =>
  allBars.filter((b) => b.up === up).map((b) => {
    const c = centre(b);
    return box(b.x0, b.t, b.x1, b.b) + (b.h < b.t ? box(c, b.h, c + 1, b.t) : "") + (b.l > b.b ? box(c, b.b, c + 1, b.l) : "");
  }).join("");
const volPath = (up: boolean) => volumes.filter((v) => v.up === up).map((v) => box(v.x0, v.y, v.x1, BASE)).join("");
const plusPath = (x: number, y: number) => `${box(x - 1, y, x + 2, y + 1)}${box(x, y - 1, x + 1, y + 2)}`;
const crossPath =
  afternoon.map((b) => plusPath(centre(b), b.x0 < 188 ? 714 : 715)).join("") +
  morning.slice(2).map((b) => plusPath(centre(b), at(vwap, centre(b)))).join("");
const dotPath = allBars.map((b) => `M${centre(b)} 652.500h.01`).join("");

/* Plot window in chart units */
const VX = 58, VY = 82, VW = 2389, VH = 1289;
const yOf = (p: number) => 112.3 + (5640 - p) * 1.9286;
const pctY = (y: number) => ((y - VY) / VH) * 100;
const pctX = (x: number) => ((x - VX) / VW) * 100;
const ticks = Array.from({ length: 33 }, (_, i) => 5640 - i * 20);

const tags: [number, string][] = [
  [5589, "green"], [5579, "green"], [5550, "grey"], [5531, "pink"], [5525, "grey"], [5502, "pink"], [5481, "blue"],
  [5461, "yellow"], [5428, "dim"], [5409, "yellow"], [5396, "dim"], [5393, "yellow"], [5360, "white"], [5366, "cyan"],
  [5329, "amber"], [5316, "cursor"], [5302, "cyan"],
];
const times: [number, string][] = [
  [89, "14:40"], [194, "14:45"], [294, "14:50"], [363, "14:55"], [433, "15:00"], [506, "15:05"], [582, "15:10"], [659, "15:15"],
  [739, "15:20"], [868, "27"], [1175, "09:10"], [1410, "09:15"], [1561, "09:20"], [1744, "09:25"], [2053, "09:35"], [2127, "09:40"],
  [2201, "09:45"], [2275, "09:50"], [2349, "09:55"], [2423, "10:00"],
];
const money = (n: number) => n.toLocaleString("en-US");

@customElement("price-chart")
export class PriceChart extends LitElement {
  static styles = [
    iconCss,
    markCss,
    css`
      :host { display: grid; grid-template-columns: minmax(0, 1fr) 61px; grid-template-rows: minmax(0, 1fr) 25px; background: #000; color: #dbdbdb; border: 2px solid #8c8c8c; border-radius: 4px; overflow: hidden; font: 12px/16px "Open Sans", "Noto Sans CJK JP", sans-serif; }
      button { font: inherit; color: inherit; background: none; border: 0; padding: 0; display: flex; align-items: center; }
      .plot { position: relative; border-right: 1px solid #6a6a6a; border-bottom: 1px solid #77797f; overflow: hidden; }
      .canvas { position: absolute; inset: 0; width: 100%; height: 100%; display: block; }
      .crisp { shape-rendering: crispEdges; }
      .prices { position: relative; border-bottom: 1px solid #77797f; overflow: hidden; }
      .times { position: relative; border-right: 1px solid #6a6a6a; }
      .corner { display: grid; place-items: center; }
      .corner .ic { width: 18px; height: 18px; stroke-width: 2; }
      .tick, .tag { position: absolute; left: 0; width: 43px; height: 17px; line-height: 16px; padding-left: 8px; box-sizing: border-box; transform: translateY(-50%); }
      .tag { border-radius: 0 2px 2px 0; font-weight: 600; color: #fff; }
      .side { position: absolute; right: 0; height: 17px; line-height: 16px; padding: 0 4px; transform: translateY(-50%); border-radius: 2px 0 0 2px; color: #fff; }
      .green { background: #4caf50; }
      .grey { background: #787b86; }
      .pink { background: #e91e63; }
      .blue { background: #2962ff; font-weight: 600; }
      .side.blue { font-size: 11px; }
      .dim { background: #555; }
      .yellow, .white, .cyan, .amber, .sky { color: #131313; font-weight: 400; }
      .yellow { background: #ffeb3b; }
      .white { background: #fff; }
      .cyan { background: #00bcd4; }
      .amber { background: #fbc02d; }
      .sky { background: #90bff9; }
      .cursor { background: #363a45; height: 20px; line-height: 19px; }
      .side.cursor { padding: 0; width: 21px; display: grid; place-items: center; }
      .side.cursor .ic { width: 24px; height: 24px; stroke-width: 1.600; }
      .side.snug { padding: 0 3px; }
      .wide { width: 58px; z-index: 1; }
      .mid { width: 46px; }
      .time { position: absolute; top: 5px; transform: translateX(-50%); }
      .day { font-weight: 700; }
      .cursor-time { position: absolute; top: 0; transform: translateX(-50%); background: #363a45; color: #fff; width: 134px; height: 23px; line-height: 24px; text-align: center; font-weight: 600; white-space: pre; border-radius: 0 0 2px 2px; }
      .legend { position: absolute; left: 7px; top: 4px; display: grid; gap: 5px; }
      .row { display: flex; align-items: center; height: 22px; }
      .name { font-size: 15px; margin: 0 15px 0 5px; white-space: pre; }
      .flag { width: 12px; height: 12px; background: #2979ff; clip-path: polygon(0 0, 100% 0, 70% 50%, 100% 100%, 0 100%); margin-right: 12px; }
      .live { width: 8px; height: 8px; border-radius: 50%; background: #42bda8; border: 5px solid #123129; margin-right: 9px; }
      .vlabel { font-size: 13px; margin-right: 2px; }
      .vol { color: #089981; font-size: 12px; }
      .fold { width: 32px; height: 21px; border: 1px solid #4a4a4a; border-radius: 3px; background: #000; box-sizing: border-box; margin-right: 16px; font-weight: 600; }
      .fold .ic { width: 20px; height: 20px; stroke-width: 2; }
      .sync { width: 18px; height: 18px; }
      .gap { position: absolute; right: 10px; top: 8px; display: flex; gap: 1px; font-size: 10px; font-weight: 600; line-height: 19px; color: #fff; }
      .gap span { background: #1d1f24; padding: 0 4px; }
      .gap .up { background: #2e6b31; }
      .note { position: absolute; font-size: 10px; line-height: 12px; }
      .n5600 { color: #ffeb3b; transform: translate(-100%, -50%); }
      .n1530 { color: #22a6b8; transform: translateY(-50%); font-size: 9px; }
      .tv { position: absolute; left: 10px; bottom: 12px; width: 32px; height: 18px; }
    `,
  ];

  private at(x: number | null, y: number | null) {
    return `${x === null ? "" : `left:${pctX(x)}%;`}${y === null ? "" : `top:${pctY(y)}%`}`;
  }

  private drawPlot() {
    return svg`
      <g class="crisp">
        <path d="${box(58, 86, 869, 92)}${box(58, 714, 869, 1214)}${box(869, 276, 2447, 382)}${box(869, 588, 2447, 648)}" fill="#0c0204"/>
        <path d="${box(58, 92, 869, 714)}${box(869, 382, 2447, 588)}" fill="#23080c"/>
        <path d="${ticks.map((p) => box(58, Math.round(yOf(p)), 2447, Math.round(yOf(p)) + 1)).join("")}" fill="#f2f2f2" fill-opacity=".055"/>
        <path d="${volPath(true)}" fill="#0e2059"/>
        <path d="${volPath(false)}" fill="#222d3a"/>
      </g>
      <path d="M${volMa.map((p) => p.join(" ")).join("L")}" fill="none" stroke="#4d4a18" stroke-width="1.500" stroke-dasharray="1.500 3"/>
      <g class="crisp" fill="none">
        <path d="M855.500 82V1371" stroke="#7a6720" stroke-dasharray="1 3"/>
        <path d="M58 895.500H2447" stroke="#6a2a2e" stroke-dasharray="1 3"/>
        <path d="M64 188H2443" stroke="#b2ebf2" stroke-width="2" stroke-dasharray="2 6"/>
        <path d="M58 285H843" stroke="#22a6b8" stroke-width="2"/>
        <path d="M857 368.500H1992" stroke="#a89a4b" stroke-dasharray="6 5"/>
        <path d="M58 723.500H853" stroke="#a3934d" stroke-dasharray="5 6"/>
        <path d="M842 712H2447" stroke="#00bcd4" stroke-width="2"/>
      </g>
      <path d="M58 185L1022 178.500" fill="none" stroke="#8c8c8c" stroke-opacity=".45"/>
      <circle cx="1024" cy="178" r="2" fill="#333" stroke="#777"/>
      <circle cx="868" cy="246" r="4" fill="#4a7038"/>
      <path d="${dotPath}" fill="none" stroke="#d8d0d2" stroke-opacity=".75" stroke-width="5" stroke-linecap="round"/>
      <g class="crisp">
        <path d="${crossPath}" fill="#3d5afe"/>
        <path d="${candlePath(true)}" fill="#089981"/>
        <path d="${candlePath(false)}" fill="#f23645"/>
        <path d="M62 712.500H2447" stroke="#fbc02d" stroke-width="3" stroke-dasharray="3 9" stroke-dashoffset="5"/>
        <path d="${box(1677, 505, 1868, 631)}" fill="#089981" fill-opacity=".2"/>
        <path d="${box(1799, 521, 1868, 631)}" fill="#089981" fill-opacity=".2"/>
        <path d="${box(1677, 631, 1868, 693)}" fill="#f44336" fill-opacity=".2"/>
        <path d="${box(1677, 505, 1868, 506)}" fill="#1f4541"/>
        <path d="${box(1676, 631, 1868, 632)}" fill="#868a93"/>
        <path d="${box(1918, 457, 2010, 521)}" fill="#ffeb3b" fill-opacity=".25"/>
        <path d="${box(1918, 521, 2010, 641)}" fill="#00bcd4" fill-opacity=".22"/>
        <path d="${box(1918, 457, 2010, 458)}" fill="#7c5a1e"/>
        <path d="${box(1650, 497, 2098, 499)}" fill="#ff9800"/>
        <path d="M1918.500 82V1371M58 737.500H2447" fill="none" stroke="#76808c" stroke-dasharray="5 6"/>
      </g>
      <path d="M1799 631L1866 522" fill="none" stroke="#7a8585" stroke-dasharray="5 6"/>
      <path d="M1861 524l6-3 2 7" fill="none" stroke="#5f7472"/>
      <path d="M2015.500 466L2049.500 663L2097.500 495.500L2171.500 691M2158 684.500L2171.500 691L2178 677.500" fill="none" stroke="#7293c4" stroke-width="2"/>
      <g fill="#80deea">
        <path d="M1772 418h3v10h3.500l-5 5-5-5h3.500z"/>
        <path d="M1843 681h3v-10h3.500l-5-5-5 5h3.500z"/>
        <path d="M1871 487h3.500v9H1871zM1876 487l3-3 1-4.500h2.500v6h4v8l-2 2.500H1878l-2-1z"/>
      </g>`;
  }

  render() {
    return html`
      <div class="plot">
        <svg class="canvas" viewBox="${VX} ${VY} ${VW} ${VH}" preserveAspectRatio="none" role="img" aria-label="5803 chart">${this.drawPlot()}</svg>
        <div class="legend">
          <div class="row">
            ${mark("fuji")}<span class="name">フジクラ · 15秒 · TSE</span><span class="flag"></span><span class="live"></span>
            <span class="vlabel">出来高</span><span class="vol">113.7 K</span>
          </div>
          <div class="row">
            <button class="fold" aria-label="9 indicators">${ic("chev")}9</button>
            <svg class="sync" viewBox="0 0 18 18" aria-hidden="true">
              <circle cx="9" cy="9" r="9" fill="#3d1f52" />
              <path d="M4.500 9.500a4.500 4.500 0 0 1 8-3M13.500 8.500a4.500 4.500 0 0 1-8 3M12.500 3.500v3h-3M5.500 14.500v-3h3" fill="none" stroke="#b388ff" stroke-width="1.500" />
            </svg>
          </div>
        </div>
        <div class="gap"><span>Daily Gap</span><span class="up">3.21%</span></div>
        <span class="note n5600" style=${this.at(2442, 181)}>5600</span>
        <span class="note n1530" style=${this.at(832, 280)}>1530</span>
        <span class="side blue" style=${this.at(null, yOf(5481))}>VWAP</span>
        <span class="side white" style=${this.at(null, yOf(5360))}>week :w_op</span>
        <span class="side cursor" style=${this.at(null, yOf(5316))}>${ic("plusc")}</span>
        <span class="side sky snug" style=${this.at(null, 1370)}>Volume</span>
        <span class="side yellow snug" style=${this.at(null, 1356)}>Volume MA</span>
        <svg class="tv" viewBox="0 0 36 20" aria-hidden="true">
          <path d="M14 19H7V8H0V1h14zM28 19h-8l7.500-18h8z" fill="#d6d6d6" stroke="#000" stroke-width=".5" /><circle cx="20" cy="5" r="4" fill="#d6d6d6" />
        </svg>
      </div>
      <div class="prices">
        ${ticks.map((p) => html`<span class="tick" style=${this.at(null, yOf(p) - 1)}>${money(p)}</span>`)}
        ${tags.map(([p, c]) => html`<span class="tag ${c}" style=${this.at(null, yOf(p))}>${money(p)}</span>`)}
        <span class="tag sky mid" style=${this.at(null, 1370)}>16.8 K</span>
        <span class="tag yellow wide" style=${this.at(null, 1356)}>103.08 K</span>
      </div>
      <div class="times">
        ${times.map(([x, t]) => html`<span class=${classMap({ time: true, day: t === "27" })} style=${this.at(x, null)}>${t}</span>`)}
        <span class="cursor-time" style=${this.at(1918, null)}>5月 27 (水)   09:28:45</span>
      </div>
      <div class="corner">${ic("hex")}</div>
    `;
  }
}

/* ------------------------------------------------------------------ */
/* Page                                                                */
/* ------------------------------------------------------------------ */
type Tab = { logo: string; name: string; chg?: string; line?: string; active?: boolean; pinned?: boolean };
const tabs: Tab[] = [
  { logo: "advan", name: "6857", chg: "+5.39%", pinned: true },
  { logo: "soft", name: "9984", chg: "−2.87%", line: "l-green", pinned: true },
  { logo: "rohm", name: "6963", chg: "−0.64%", pinned: true },
  { logo: "fuji", name: "5803", chg: "+1.2%", line: "l-yellow", active: true, pinned: true },
  { logo: "nin", name: "7974", chg: "+1.44%", line: "l-orange", pinned: true },
  { logo: "toy", name: "7203", chg: "−0.3%", pinned: true },
  { logo: "kio", name: "285A", chg: "+2.11%" },
  { logo: "tdk", name: "6762", chg: "+2.29%" },
  { logo: "fix", name: "3687", chg: "−0.2%" },
  { logo: "shift", name: "3697", chg: "+6.83%" },
  { logo: "fix", name: "3687", chg: "−0.2%" },
  { logo: "pana", name: "6752", chg: "+0.72%" },
  { logo: "index", name: "W TOP SELL kiri380" },
];

@customElement("app-root")
export class AppRoot extends LitElement {
  static styles = [
    iconCss,
    markCss,
    css`
      :host { display: flex; flex-direction: column; height: 100vh; background: #2e2e2e; color: #dbdbdb; overflow: hidden; font: 13px/18px "Open Sans", "Noto Sans CJK JP", sans-serif; }
      button { font: inherit; color: inherit; background: none; border: 0; padding: 0; margin: 0; display: flex; align-items: center; justify-content: center; flex: none; white-space: nowrap; }
      .tabs { display: flex; height: 35px; background: #3d3d3d; flex: none; }
      .tab { flex: 0 1 171px; min-width: 0; height: 35px; display: flex; align-items: center; position: relative; box-sizing: border-box; padding: 0 8px 0 12px; }
      .tab::after { content: ""; position: absolute; right: 0; top: 7px; height: 21px; width: 1px; background: #575757; }
      .tab.active { background: #0f0f0f; border-radius: 6px 6px 0 0; }
      .tab.active::after { display: none; }
      .pick { gap: 4px; flex: 1 1 0; min-width: 0; justify-content: flex-start; overflow: hidden; height: 35px; }
      .pick b { font-weight: 600; }
      .long { -webkit-mask-image: linear-gradient(90deg, #000 75%, transparent 98%); mask-image: linear-gradient(90deg, #000 75%, transparent 98%); }
      .tri { width: 10px; height: 9px; background: currentColor; clip-path: polygon(50% 0, 100% 100%, 0 100%); margin: 0 2px 0 1px; }
      .down .tri { clip-path: polygon(0 0, 100% 0, 50% 100%); }
      .chg { display: flex; align-items: center; gap: 4px; color: #089981; }
      .chg.down { color: #f23645; }
      .line { position: absolute; left: 12px; right: 12px; bottom: 0; height: 3px; border-radius: 1px; }
      .l-green { background: #4caf50; }
      .l-yellow { background: #fdd835; }
      .l-orange { background: #fb8c00; }
      .x .ic { width: 20px; height: 20px; stroke-width: 1.600; }
      .x { margin-right: -5px; }
      .win { margin-left: auto; display: flex; align-items: center; }
      .win button, .newtab { width: 50px; height: 35px; }
      .newtab { width: 36px; color: #9a9a9a; }
      .win .faint { color: #9a9a9a; }
      .wsep { width: 1px; height: 21px; background: #575757; }

      .bar { display: flex; align-items: center; height: 41px; background: #0f0f0f; flex: none; padding: 3px 5px 0 12px; margin-bottom: 4px; box-sizing: border-box; }
      .side { display: flex; align-items: center; }
      .end { margin-left: auto; }
      .sep { width: 1px; height: 22px; background: #3d3d3d; margin: 0 6px; flex: none; }
      .sep.far { margin-left: 14px; }
      .avatar { position: relative; width: 28px; height: 28px; border-radius: 50%; margin-right: 16px; background: #050505; border: 1px solid #2a1a10; box-sizing: border-box; }
      .avatar svg { width: 26px; height: 26px; }
      .badge { position: absolute; left: 19px; top: -5px; min-width: 18px; height: 17px; border-radius: 9px; background: #f23645; color: #fff; font-size: 11px; line-height: 16px; text-align: center; font-weight: 600; }
      .search { width: 128px; height: 28px; background: #3d3d3d; border-radius: 14px; justify-content: space-between; padding: 0 2px 0 13px; font-weight: 700; box-sizing: border-box; margin-right: 6px; }
      .gem { width: 24px; height: 24px; border-radius: 50%; background: #0f0f0f; display: grid; place-items: center; }
      .gem .ic { width: 24px; height: 24px; }
      .sq { width: 34px; height: 34px; border-radius: 6px; }
      .on { background: #3d3d3d; }
      .frames { display: flex; gap: 3px; }
      .frames button { height: 34px; padding: 0 5px; border-radius: 6px; }
      .chevron { width: 22px; height: 34px; margin-left: 3px; }
      .charts { display: flex; gap: 4px; }
      .lab { height: 34px; gap: 4px; padding: 0 8px 0 3px; font-size: 14px; }
      .alert { margin-right: 5px; }
      .fav { display: flex; gap: 6px; margin-left: 5px; }
      .fav button { width: 22px; height: 22px; border: 1px solid #4a4a4a; border-radius: 50%; font-size: 10px; font-weight: 600; }
      .history { display: flex; gap: 4px; }
      .off { color: #6e6e6e; }
      .layout { flex-direction: column; line-height: 14px; margin: 0 3px 0 7px; font-size: 14px; }
      .layout small { color: #2962ff; font-size: 10px; line-height: 10px; font-weight: 700; }
      .who { width: 22px; height: 22px; border-radius: 50%; background: #f2f2f2; color: #1f5fa8; font-size: 11px; font-weight: 600; display: grid; place-items: center; margin: 0 8px 0 4px; }
      .tools { display: flex; gap: 4px; }
      .trade { width: 79px; height: 28px; border: 1px solid #4a4a4a; border-radius: 14px; font-size: 14px; margin: 0 9px 0 6px; }
      .post { width: 52px; height: 28px; border-radius: 14px; background: #f2f2f2; color: #0f0f0f; font-size: 14px; }

      .body { display: flex; flex: 1; min-height: 0; gap: 4px; padding-bottom: 2px; }
      .rail { width: 52px; background: #0f0f0f; border-radius: 0 4px 0 0; display: flex; flex-direction: column; align-items: center; gap: 4px; padding: 8px 0 22px; box-sizing: border-box; flex: none; }
      .rail hr { width: 36px; height: 1px; border: 0; background: #4a4a4a; margin: 4px 0; flex: none; }
      .lit { background: #f2f2f2; color: #0f0f0f; }
      .push { margin-top: auto; }
      .right { width: 45px; border-radius: 4px 0 0 0; justify-content: space-between; padding: 7px 0; }
      .right hr { width: 34px; margin: 0; }
      .group { display: flex; flex-direction: column; align-items: center; gap: 12px; }
      .low { gap: 11px; }
      .right .sq { position: relative; }
      .right .lit { border-radius: 50%; }
      .right .badge { left: 8px; top: -1px; padding: 0 4px; font-size: 12px; }
      .centre { flex: 1; min-width: 0; display: flex; flex-direction: column; gap: 1px; }
      price-chart { flex: 1; min-height: 0; }
      .foot { height: 38px; background: #0f0f0f; border-radius: 4px; display: flex; align-items: center; flex: none; font-size: 14px; }
      .ranges { display: flex; gap: 12px; padding: 0 8px 0 14px; }
      .ranges button { height: 34px; }
      .goto { margin-left: 6px; }
      .drawbar { display: flex; align-items: center; gap: 4px; height: 38px; background: #1f1f1f; border-radius: 6px; margin-left: 17px; padding-right: 1px; }
      .grip { width: 22px; height: 14px; background: radial-gradient(circle, #555 1px, transparent 2px) 7px 0 / 5px 5px; background-clip: content-box; padding: 0 6px; box-sizing: border-box; }
      .clock { margin-left: auto; font-size: 13px; }
      .foot .sep { margin: 0 10px; }
      .foot .go { margin: 0 6px 0 8px; }
    `,
  ];

  private tab(t: Tab) {
    const down = !!t.chg && t.chg.startsWith("−");
    return html`
      <div class=${classMap({ tab: true, active: !!t.active })}>
        <button class="pick" aria-pressed=${t.active ? "true" : "false"}>
          ${mark(t.logo)}<b class=${t.chg ? "" : "long"}>${t.name}</b>
          ${t.chg ? html`<span class=${classMap({ chg: true, down })}><span class="tri"></span>${t.chg}</span>` : nothing}
        </button>
        ${t.pinned ? nothing : html`<button class="x" aria-label="閉じる">${ic("close")}</button>`}
        ${t.line ? html`<span class="line ${t.line}"></span>` : nothing}
      </div>`;
  }

  private sq(name: string, cls = "") {
    return html`<button class="sq ${cls}" aria-label=${name}>${ic(name)}</button>`;
  }

  render() {
    return html`
      <header class="tabs">
        ${tabs.map((t) => this.tab(t))}
        <button class="newtab" aria-label="新しいタブ">${ic("plus")}</button>
        <div class="win">
          <button class="faint" aria-label="monitor">${ic("monitor")}</button>
          <span class="wsep"></span>
          <button class="faint" aria-label="menu"><svg class="ic" viewBox="-2 -2 32 32" aria-hidden="true">${I.dots3}</svg></button>
          <button aria-label="minimize">${ic("min")}</button>
          <button aria-label="restore">${ic("restore")}</button>
          <button aria-label="exit">${ic("exit")}</button>
        </div>
      </header>

      <nav class="bar">
        <div class="side">
          <button class="avatar" aria-label="11">
            <svg viewBox="0 0 26 26" aria-hidden="true"><path d="M2 9h22M2 17h22M9 2v22" stroke="#1b2430" fill="none"/><path d="M11 23l1-7 1-5 2-4" stroke="#8a3f1a" fill="none"/></svg>
            <span class="badge">11</span>
          </button>
          <button class="search">5803<span class="gem">${ic("gem")}</span></button>
          ${this.sq("plusc")}
          <span class="sep"></span>
          <div class="frames">
            ${["15秒", "2分", "10分", "30分", "1時間", "4時間", "日", "週", "月"].map((f, i) => html`<button class=${i ? "" : "on"}>${f}</button>`)}
          </div>
          <button class="chevron" aria-label="時間足">${ic("chev")}</button>
          <span class="sep"></span>
          <div class="charts">${this.sq("candles")}${this.sq("candlev", "on")}</div>
          <button class="chevron" aria-label="チャートタイプ">${ic("chev")}</button>
          <span class="sep"></span>
          <button class="lab">${ic("indic")}インジケーター</button>
          <button class="chevron" aria-label="お気に入り">${ic("chev")}</button>
          ${this.sq("grid4")}
          <div class="fav">${["0", "2", "4", "D", "M", "W", "F", "P", "O", "C", "個", "V", "Z"].map((c) => html`<button>${c}</button>`)}</div>
          <span class="sep far"></span>
          <button class="lab alert">${ic("alarm")}アラート</button>
          <button class="lab">${ic("rewind")}リプレイ</button>
          <button class="chevron" aria-label="リプレイの設定">${ic("chev")}</button>
          <span class="sep"></span>
          <div class="history">${this.sq("undo")}${this.sq("redo", "off")}</div>
        </div>
        <div class="side end">
          ${this.sq("layout")}
          <button class="layout">JP stocks<small>保存</small></button>
          <button class="chevron" aria-label="レイアウト">${ic("chev")}</button>
          <span class="who">J</span>
          <span class="sep"></span>
          <div class="tools">${["quick", "hex", "full", "camera"].map((n) => this.sq(n))}</div>
          <button class="trade">トレード</button>
          <button class="post">投稿</button>
        </div>
      </nav>

      <main class="body">
        <aside class="rail">
          ${this.sq("cross", "on")}${["trend", "fib", "pattern", "short", "rect", "price", "heart"].map((n) => this.sq(n))}
          <hr />
          ${["ruler", "zoomin"].map((n) => this.sq(n))}
          <hr />
          ${["magnet", "penlock", "lock", "eye"].map((n) => this.sq(n))}${this.sq("link", "lit")}
          <hr />
          ${this.sq("trash")}${this.sq("star", "lit push")}
        </aside>

        <section class="centre">
          <price-chart></price-chart>
          <footer class="foot">
            <div class="ranges">
              ${["1日", "5日", "1ヶ月", "3ヶ月", "6ヶ月", "年初来", "1年", "5年", "すべて"].map((r) => html`<button>${r}</button>`)}
            </div>
            <span class="wsep"></span>
            ${this.sq("goto", "goto")}
            <div class="drawbar">
              <span class="grip"></span>
              ${["hray", "ray", "raybox", "channel", "upar", "price", "rect", "table", "downar", "drange", "long", "prange", "zig", "elliott", "fib", "pin", "short", "textt"].map((n) => this.sq(n))}
            </div>
            <button class="clock">09:30:48 UTC+9</button>
            <span class="sep"></span>
            <button>配当調整</button>
            ${this.sq("collapse", "on go")}
          </footer>
        </section>

        <aside class="rail right">
          <div class="group">
            ${this.sq("list")}
            <button class="sq" aria-label="アラート">${ic("clock")}<span class="badge">99+</span></button>
            ${this.sq("layers")}${this.sq("chat")}
          </div>
          <div class="group low">
            ${["radar", "mountain", "calendar", "rss", "bell"].map((n) => this.sq(n))}${this.sq("apps", "lit")}
            <hr />
            ${this.sq("help")}
          </div>
        </aside>
      </main>
    `;
  }
}
